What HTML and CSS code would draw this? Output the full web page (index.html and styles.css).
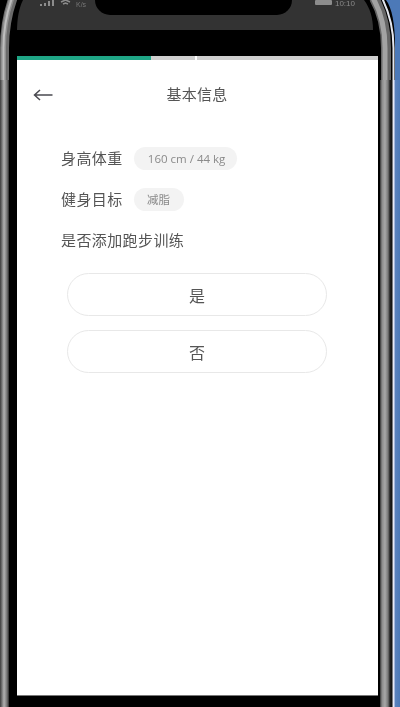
FILE: index.html
```html
<!DOCTYPE html>
<html lang="zh-CN">
<head>
<meta charset="utf-8">
<title>基本信息</title>
<link rel="stylesheet" href="styles.css">
</head>
<body>
<div class="device">
  <div class="rim-left"></div>
  <div class="bezel-left"></div>
  <div class="column">
    <div class="status">
      <div class="status-left">
        <svg class="signal" width="16" height="6" viewBox="0 0 16 6"><path d="M1 6V4h2v2zM5 6V3h2v3zM9 6V1h2v5zM13 6V0h2v6z"/></svg>
        <svg class="wifi" width="11" height="6" viewBox="0 0 11 6"><path d="M1 2 5.500 0 10 2M3 4l2.500-1L8 4" /></svg>
        <span class="speed">K/s</span>
      </div>
      <div class="notch"></div>
      <div class="status-right">
        <span class="battery"></span>
        <span class="clock">10:10</span>
      </div>
    </div>
    <div class="black-band"></div>
    <main class="screen">
      <div class="progress">
        <div class="progress-done"></div>
        <div class="progress-next"></div>
        <div class="progress-gap"></div>
        <div class="progress-rest"></div>
      </div>
      <header class="nav">
        <svg class="back" width="21" height="16" viewBox="0 0 21 16"><path d="M19.500 8H1.500M7 3 1.500 8 7 13"/></svg>
        <h1 class="title">基本信息</h1>
      </header>
      <section class="form">
        <div class="row">
          <span class="label">身高体重</span>
          <span class="chip chip-wide">160 cm / 44 kg</span>
        </div>
        <div class="row">
          <span class="label">健身目标</span>
          <span class="chip chip-small">减脂</span>
        </div>
        <div class="row">
          <span class="label">是否添加跑步训练</span>
        </div>
        <div class="options">
          <button class="option">是</button>
          <button class="option">否</button>
        </div>
      </section>
    </main>
    <div class="bottom-band"></div>
  </div>
  <div class="bezel-right"></div>
  <div class="rim-right"></div>
  <svg class="corners" width="400" height="80" viewBox="0 0 400 80">
    <path class="corner-fill" d="M0 0H23C19 8 17 18 17 32V60H9V80H0z"/>
    <path class="corner-fill" d="M364 0C370 8 373 18 373 30L378 56H380V80H400V0z"/>
    <path class="blue" d="M386 0C392 8 395 24 395 46V80H400V0z"/>
    <path class="rim-base" d="M4.500 80V48C4.500 30 8 12 13 -2"/>
    <path class="rim-mid" d="M3.500 80V48C3.500 30 7 12 12 -2"/>
    <path class="rim-hi" d="M3.500 80V48C3.500 30 7 12 12 -2"/>
    <path class="rim-r-base" d="M386 80V48C386 30 382 12 374 -2"/>
    <path class="rim-r-mid" d="M385 80V48C385 30 381 12 373 -2"/>
    <path class="rim-r-line" d="M393.500 80V48C393.500 30 389 12 382 -2"/>
  </svg>
</div>
</body>
</html>
```
FILE: styles.css
```css
* { box-sizing: border-box; }
html, body { margin: 0; padding: 0; background: #000; }
body { font-family: "Noto Sans CJK SC", "Noto Sans", sans-serif; }
.device { position: relative; display: flex; width: 400px; height: 707px; overflow: hidden; background: #000; filter: blur(.45px); }
.rim-left { width: 9px; background: linear-gradient(90deg, #3a3a3a 0, #777 2px, #b0b0b0 4px, #8a8a8a 6px, #555 8px, #222 9px); }
.bezel-left { width: 8px; background: #000; }
.column { width: 361px; display: flex; flex-direction: column; }
.status { position: relative; height: 30px; background: #333; display: flex; justify-content: space-between; }
.status-left { display: flex; gap: 5px; padding: 0 0 0 22px; align-items: flex-start; height: 6px; }
.signal { fill: #8c8c8c; }
.wifi { fill: none; stroke: #8c8c8c; stroke-width: 1.500; }
.speed { font-size: 7px; line-height: 8px; margin-top: 1px; color: #777; font-family: "Liberation Sans", sans-serif; }
.notch { position: absolute; left: 78px; top: 0; width: 197px; height: 15px; background: #000; border-radius: 0 0 16px 16px; }
.status-right { display: flex; gap: 3px; padding: 0 23px 0 0; align-items: flex-start; height: 8px; }
.battery { width: 17px; height: 5px; background: #8c8c8c; border-radius: 1px; }
.clock { font-size: 8px; line-height: 8px; color: #8a8a8a; font-family: "Liberation Sans", sans-serif; }
.black-band { height: 26px; background: #000; }
.screen { width: 361px; height: 639px; background: #fff; }
.progress { display: flex; height: 4px; }
.progress-done { width: 134px; background: #1fa686; }
.progress-next { width: 44px; background: #cfcfcf; }
.progress-gap { width: 2px; background: #fff; }
.progress-rest { flex: 1; background: #cfcfcf; }
.nav { position: relative; height: 70px; display: flex; align-items: center; justify-content: center; }
.back { position: absolute; left: 16px; top: 27px; fill: none; stroke: #4a4a50; stroke-width: 1.500; }
.title { margin: 0; font-size: 15px; line-height: 20px; font-weight: 400; color: #555; letter-spacing: .3px; padding: 0 1px 3px 0; }
.form { padding: 16px 0 0 44px; }
.row { display: flex; align-items: center; gap: 11px; height: 24px; margin-bottom: 17px; }
.label { font-size: 15px; line-height: 20px; color: #555; letter-spacing: .4px; white-space: nowrap; }
.chip { display: flex; align-items: center; justify-content: center; height: 23px; border-radius: 12px; background: #f3f3f3; color: #8a8a8a; font-size: 11.500px; }
.chip-wide { width: 103px; padding-left: 3px; font-family: "Open Sans", sans-serif; }
.chip-small { width: 50px; }
.options { display: flex; flex-direction: column; gap: 14px; margin: 21px 0 0 6px; width: 260px; }
.option { height: 43px; padding: 0; background: #fff; border: 1px solid #e8e8e8; border-radius: 22px; color: #555; font: inherit; font-size: 16px; }
.bottom-band { flex: 1; background: #000; border-top: 1px solid #777; }
.bezel-right { width: 2px; background: #000; }
.rim-right { flex: 1; background: linear-gradient(90deg, #333 0, #8a8a8a 2px, #a8a8a8 5px, #777 8px, #222 10px, #111 12px, #dfe4ee 13px, #eef 14px, #5b82bd 15px, #4c79b8 20px); }
.corners { position: absolute; left: 0; top: 0; fill: none; }
.corner-fill { fill: #000; }
.rim-base { stroke: #6a6a6a; stroke-width: 9; }
.rim-mid { stroke: #8f8f8f; stroke-width: 5; }
.rim-hi { stroke: #bdbdbd; stroke-width: 2; }
.rim-r-base { stroke: #666; stroke-width: 10; }
.rim-r-mid { stroke: #a2a2a2; stroke-width: 5; }
.rim-r-line { stroke: #e3e6ee; stroke-width: 2; }
.blue { fill: #4c79b8; }
```
